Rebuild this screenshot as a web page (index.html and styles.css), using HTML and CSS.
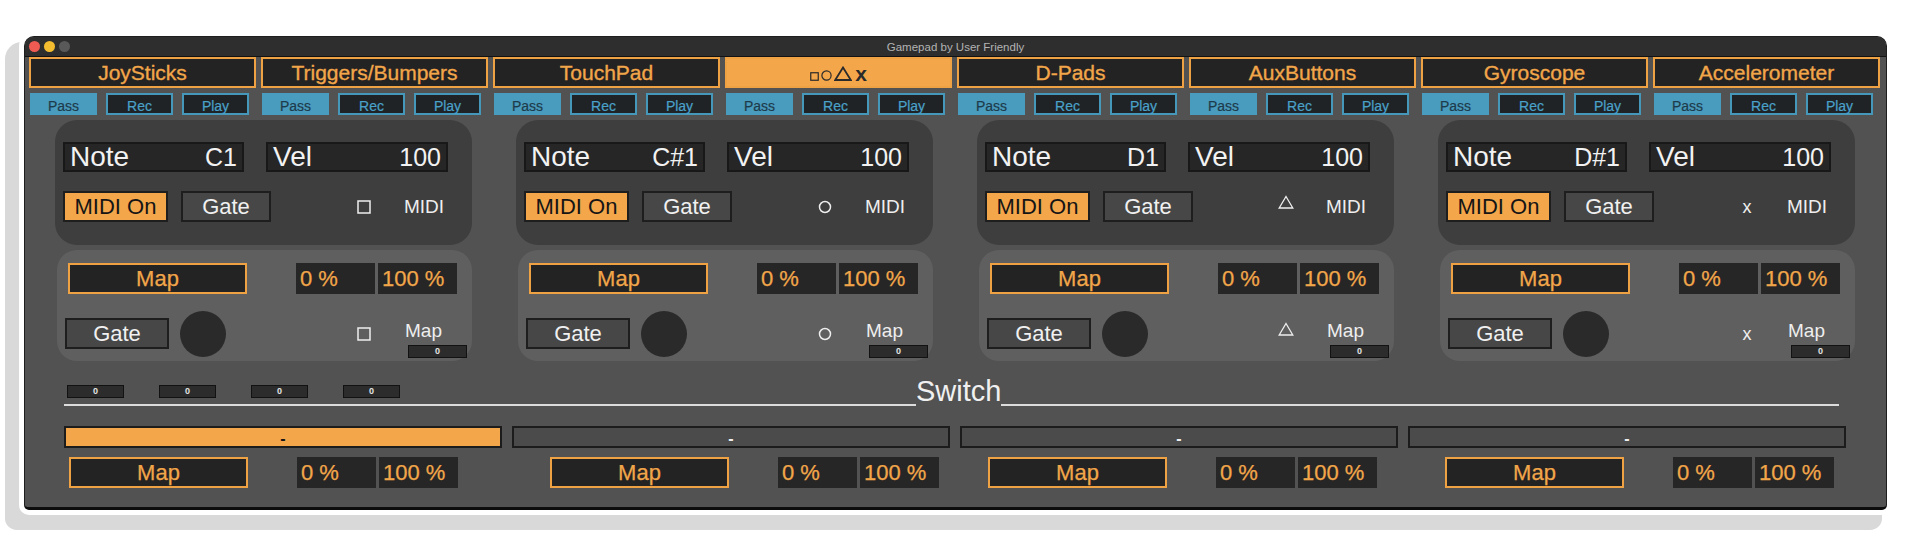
FILE: index.html
```html
<!DOCTYPE html>
<html lang="en">
<head>
    <meta charset="UTF-8">
    <title>Gamepad by User Friendly</title>
    <link rel="stylesheet" href="styles.css">
</head>
<body>
    <div class="window">
        <div class="titlebar">
            <div class="lights">
                <span class="light red"></span>
                <span class="light yellow"></span>
                <span class="light off"></span>
            </div>
            <div class="title">Gamepad by User Friendly</div>
            <div></div>
        </div>

        <div class="content">
            <!-- Module tabs -->
            <div class="modules">
                <div class="module">
                    <div class="tab">JoySticks</div>
                    <div class="sub"><span class="sb pass">Pass</span><span class="sb">Rec</span><span class="sb">Play</span></div>
                </div>
                <div class="module">
                    <div class="tab">Triggers/Bumpers</div>
                    <div class="sub"><span class="sb pass">Pass</span><span class="sb">Rec</span><span class="sb">Play</span></div>
                </div>
                <div class="module">
                    <div class="tab">TouchPad</div>
                    <div class="sub"><span class="sb pass">Pass</span><span class="sb">Rec</span><span class="sb">Play</span></div>
                </div>
                <div class="module">
                    <div class="tab active">
                        <div class="sym">
                            <svg width="9" height="9" viewBox="0 0 9 9"><rect x="0.75" y="0.75" width="7.5" height="7.5" fill="none" stroke="#2a2a2a" stroke-width="1.2"/></svg>
                            <svg width="11" height="11" viewBox="0 0 11 11"><circle cx="5.5" cy="5.5" r="4.6" fill="none" stroke="#2a2a2a" stroke-width="1.2"/></svg>
                            <svg width="18" height="15" viewBox="0 0 18 15"><path d="M9 1.5 L16.8 14 H1.2 Z" fill="none" stroke="#2a2a2a" stroke-width="1.8" stroke-linejoin="miter"/></svg>
                            <span class="sym-x">x</span>
                        </div>
                    </div>
                    <div class="sub"><span class="sb pass">Pass</span><span class="sb">Rec</span><span class="sb">Play</span></div>
                </div>
                <div class="module">
                    <div class="tab">D-Pads</div>
                    <div class="sub"><span class="sb pass">Pass</span><span class="sb">Rec</span><span class="sb">Play</span></div>
                </div>
                <div class="module">
                    <div class="tab">AuxButtons</div>
                    <div class="sub"><span class="sb pass">Pass</span><span class="sb">Rec</span><span class="sb">Play</span></div>
                </div>
                <div class="module">
                    <div class="tab">Gyroscope</div>
                    <div class="sub"><span class="sb pass">Pass</span><span class="sb">Rec</span><span class="sb">Play</span></div>
                </div>
                <div class="module">
                    <div class="tab">Accelerometer</div>
                    <div class="sub"><span class="sb pass">Pass</span><span class="sb">Rec</span><span class="sb">Play</span></div>
                </div>
            </div>

            <!-- Button groups -->
            <div class="groups">
                <div class="group">
                    <div class="upper">
                        <div class="row">
                            <div class="field"><span class="name">Note</span><span class="val">C1</span></div>
                            <div class="field vel"><span class="name">Vel</span><span class="val">100</span></div>
                        </div>
                        <div class="row row2">
                            <div class="btn on">MIDI On</div>
                            <div class="btn gate">Gate</div>
                            <div class="icon"><svg width="14" height="14" viewBox="0 0 14 14"><rect x="1" y="1" width="12" height="12" fill="none" stroke="#eee" stroke-width="1.5"/></svg></div>
                            <div class="label">MIDI</div>
                        </div>
                    </div>
                    <div class="lower">
                        <div class="row map-row">
                            <div class="map">Map</div>
                            <div class="pct first">0 %</div>
                            <div class="pct">100 %</div>
                        </div>
                        <div class="row row3">
                            <div class="btn gate wide">Gate</div>
                            <div class="knob"></div>
                            <div class="icon"><svg width="14" height="14" viewBox="0 0 14 14"><rect x="1" y="1" width="12" height="12" fill="none" stroke="#eee" stroke-width="1.5"/></svg></div>
                            <div class="map-label">
                                <div class="label">Map</div>
                                <div class="mini">0</div>
                            </div>
                        </div>
                    </div>
                </div>

                <div class="group">
                    <div class="upper">
                        <div class="row">
                            <div class="field"><span class="name">Note</span><span class="val">C#1</span></div>
                            <div class="field vel"><span class="name">Vel</span><span class="val">100</span></div>
                        </div>
                        <div class="row row2">
                            <div class="btn on">MIDI On</div>
                            <div class="btn gate">Gate</div>
                            <div class="icon"><svg width="14" height="14" viewBox="0 0 14 14"><circle cx="7" cy="7" r="5.5" fill="none" stroke="#eee" stroke-width="1.5"/></svg></div>
                            <div class="label">MIDI</div>
                        </div>
                    </div>
                    <div class="lower">
                        <div class="row map-row">
                            <div class="map">Map</div>
                            <div class="pct first">0 %</div>
                            <div class="pct">100 %</div>
                        </div>
                        <div class="row row3">
                            <div class="btn gate wide">Gate</div>
                            <div class="knob"></div>
                            <div class="icon"><svg width="14" height="14" viewBox="0 0 14 14"><circle cx="7" cy="7" r="5.5" fill="none" stroke="#eee" stroke-width="1.5"/></svg></div>
                            <div class="map-label">
                                <div class="label">Map</div>
                                <div class="mini">0</div>
                            </div>
                        </div>
                    </div>
                </div>

                <div class="group">
                    <div class="upper">
                        <div class="row">
                            <div class="field"><span class="name">Note</span><span class="val">D1</span></div>
                            <div class="field vel"><span class="name">Vel</span><span class="val">100</span></div>
                        </div>
                        <div class="row row2">
                            <div class="btn on">MIDI On</div>
                            <div class="btn gate">Gate</div>
                            <div class="icon up"><svg width="16" height="14" viewBox="0 0 16 14"><path d="M8 1.5 L14.8 13 H1.2 Z" fill="none" stroke="#eee" stroke-width="1.3"/></svg></div>
                            <div class="label">MIDI</div>
                        </div>
                    </div>
                    <div class="lower">
                        <div class="row map-row">
                            <div class="map">Map</div>
                            <div class="pct first">0 %</div>
                            <div class="pct">100 %</div>
                        </div>
                        <div class="row row3">
                            <div class="btn gate wide">Gate</div>
                            <div class="knob"></div>
                            <div class="icon up"><svg width="16" height="14" viewBox="0 0 16 14"><path d="M8 1.5 L14.8 13 H1.2 Z" fill="none" stroke="#eee" stroke-width="1.3"/></svg></div>
                            <div class="map-label">
                                <div class="label">Map</div>
                                <div class="mini">0</div>
                            </div>
                        </div>
                    </div>
                </div>

                <div class="group">
                    <div class="upper">
                        <div class="row">
                            <div class="field"><span class="name">Note</span><span class="val">D#1</span></div>
                            <div class="field vel"><span class="name">Vel</span><span class="val">100</span></div>
                        </div>
                        <div class="row row2">
                            <div class="btn on">MIDI On</div>
                            <div class="btn gate">Gate</div>
                            <div class="icon"><span class="x">x</span></div>
                            <div class="label">MIDI</div>
                        </div>
                    </div>
                    <div class="lower">
                        <div class="row map-row">
                            <div class="map">Map</div>
                            <div class="pct first">0 %</div>
                            <div class="pct">100 %</div>
                        </div>
                        <div class="row row3">
                            <div class="btn gate wide">Gate</div>
                            <div class="knob"></div>
                            <div class="icon"><span class="x">x</span></div>
                            <div class="map-label">
                                <div class="label">Map</div>
                                <div class="mini">0</div>
                            </div>
                        </div>
                    </div>
                </div>
            </div>

            <!-- Switch section -->
            <div class="switch">
                <div class="seg seg-left">
                    <div class="mini wide">0</div>
                    <div class="mini wide">0</div>
                    <div class="mini wide">0</div>
                    <div class="mini wide">0</div>
                </div>
                <div class="switch-label">Switch</div>
                <div class="seg seg-right"></div>
            </div>

            <div class="bars">
                <div class="bar on">-</div>
                <div class="bar">-</div>
                <div class="bar">-</div>
                <div class="bar">-</div>
            </div>

            <div class="bars bottom">
                <div class="col">
                    <div class="map">Map</div>
                    <div class="pct first">0 %</div>
                    <div class="pct">100 %</div>
                </div>
                <div class="col">
                    <div class="map">Map</div>
                    <div class="pct first">0 %</div>
                    <div class="pct">100 %</div>
                </div>
                <div class="col">
                    <div class="map">Map</div>
                    <div class="pct first">0 %</div>
                    <div class="pct">100 %</div>
                </div>
                <div class="col">
                    <div class="map">Map</div>
                    <div class="pct first">0 %</div>
                    <div class="pct">100 %</div>
                </div>
            </div>
        </div>
    </div>
</body>
</html>
```

FILE: styles.css
```css
* {
    box-sizing: border-box;
}

html, body {
    margin: 0;
}

body {
    width: 1920px;
    height: 551px;
    overflow: hidden;
    background: #fff;
    font-family: "Liberation Sans", Arial, sans-serif;
    padding: 36px 0 0 24px;
}

/* Window frame with the grey drop card behind it */
.window {
    width: 1863px;
    height: 474px;
    background: #525252;
    border: 1px solid #1e1e1e;
    border-bottom: 3px solid #0c0c0c;
    border-radius: 10px 10px 5px 5px;
    box-shadow: 0 0 0 5px #fff, -12px 13px 0 7px #d9d9d9;
    overflow: hidden;
}

.titlebar {
    height: 20px;
    background: #2e2e2e;
    border-bottom: 1px solid #121212;
    display: grid;
    grid-template-columns: 1fr auto 1fr;
    align-items: center;
}

.lights {
    display: flex;
    gap: 4px;
    padding-left: 4px;
}

.light {
    width: 11px;
    height: 11px;
    border-radius: 50%;
}

.light.red { background: #ee5b52; }
.light.yellow { background: #f4bd30; }
.light.off { background: #595959; }

.title {
    font-size: 11.5px;
    color: #b3b3b3;
}

.content {
    padding: 0 6px 0 4px;
}

/* Module tabs */
.modules {
    display: grid;
    grid-template-columns: repeat(8, 227px);
    column-gap: 5px;
}

.tab {
    height: 31px;
    border: 2px solid #efa244;
    background: #232323;
    color: #f2a64a;
    font-size: 21px;
    -webkit-text-stroke: 0.35px #f2a64a;
    display: flex;
    align-items: center;
    justify-content: center;
    padding-top: 1px;
}

.tab.active {
    background: #f4a64b;
}

.sym {
    display: flex;
    align-items: flex-end;
    gap: 2px;
    height: 15px;
    margin-top: 1px;
}

.sym svg {
    display: block;
}

.sym-x {
    font-size: 21px;
    font-weight: bold;
    line-height: 14px;
    color: #2a2a2a;
    -webkit-text-stroke: 0;
    margin-left: 1px;
}

.sub {
    display: grid;
    grid-template-columns: repeat(3, 67px);
    column-gap: 9px;
    margin: 5px 0 0 1px;
}

.sb {
    height: 22px;
    border: 2px solid #4698bb;
    background: #1f2326;
    color: #4aa1c9;
    font-size: 14px;
    -webkit-text-stroke: 0.2px #4aa1c9;
    line-height: 20px;
    padding-top: 1px;
    text-align: center;
}

.sb.pass {
    background: #4a9cbf;
    border-color: #4a9cbf;
    color: #1d3b4b;
    -webkit-text-stroke: 0.2px #1d3b4b;
}

/* Button groups */
.groups {
    display: grid;
    grid-template-columns: repeat(4, 417px);
    column-gap: 44px;
    margin: 5px 0 0 26px;
}

.upper {
    height: 125px;
    background: #3e3e3e;
    border-radius: 22px;
    padding: 22px 0 0 8px;
}

.row {
    display: flex;
    align-items: center;
}

.field {
    width: 181px;
    height: 30px;
    background: #262626;
    border: 2px solid #181818;
    color: #f2f2f2;
    display: flex;
    align-items: center;
    justify-content: space-between;
    padding: 0 5px;
}

.field.vel {
    width: 182px;
    margin-left: 22px;
}

.field .name {
    font-size: 28px;
}

.field .val {
    font-size: 25px;
}

.row2 {
    margin-top: 19px;
}

.btn {
    height: 31px;
    border: 2px solid #1e1e1e;
    font-size: 22px;
    display: flex;
    align-items: center;
    justify-content: center;
}

.btn.on {
    width: 105px;
    background: #f4a64b;
    color: #151515;
}

.btn.gate {
    width: 90px;
    margin-left: 13px;
    background: #474747;
    color: #f0f0f0;
}

.btn.gate.wide {
    width: 104px;
    margin-left: 0;
}

.icon {
    width: 30px;
    margin-left: 78px;
    display: flex;
    justify-content: center;
}

.icon svg {
    display: block;
}

.icon.up {
    margin-bottom: 10px;
}

.x {
    color: #f0f0f0;
    font-size: 18px;
    line-height: 14px;
}

.label {
    margin-left: 25px;
    font-size: 19px;
    line-height: 20px;
    color: #eeeeee;
}

.lower {
    height: 111px;
    margin: 5px 0 0 2px;
    background: #5f5f5f;
    border-radius: 20px;
    padding-top: 13px;
}

.map-row {
    padding-left: 11px;
}

.map {
    width: 179px;
    height: 31px;
    background: #232323;
    border: 2px solid #efa244;
    color: #f2a64a;
    font-size: 22px;
    -webkit-text-stroke: 0.25px #f2a64a;
    display: flex;
    align-items: center;
    justify-content: center;
}

.pct {
    width: 79px;
    height: 31px;
    margin-left: 3px;
    background: #262626;
    color: #f2a64a;
    font-size: 22px;
    -webkit-text-stroke: 0.25px #f2a64a;
    line-height: 31px;
    padding-left: 4px;
}

.pct.first {
    margin-left: 49px;
}

.row3 {
    height: 49px;
    margin-top: 15px;
    padding-left: 8px;
}

.knob {
    width: 46px;
    height: 46px;
    margin-left: 11px;
    border-radius: 50%;
    background: #2a2a2a;
}

.row3 .icon {
    margin-left: 123px;
}

.map-label {
    align-self: flex-end;
    margin-left: 26px;
}

.map-label .label {
    margin-left: 0;
}

.mini {
    width: 59px;
    height: 13px;
    margin: 4px 0 0 3px;
    background: #2c2c2c;
    border: 1px solid #121212;
    color: #e4e4e4;
    font-size: 9px;
    font-weight: bold;
    line-height: 11px;
    text-align: center;
}

/* Switch section */
.switch {
    display: flex;
    align-items: flex-end;
    width: 1775px;
    height: 29px;
    margin: 16px 0 0 35px;
}

.seg {
    border-bottom: 2px solid #dcdcdc;
}

.seg-left {
    width: 852px;
    display: flex;
    align-items: flex-end;
    gap: 35px;
    padding: 0 0 6px 3px;
}

.mini.wide {
    width: 57px;
    margin: 0;
}

.switch-label {
    font-size: 29px;
    line-height: 29px;
    color: #f0f0f0;
}

.seg-right {
    flex: 1;
}

.bars {
    display: grid;
    grid-template-columns: repeat(4, 438px);
    column-gap: 10px;
    margin: 20px 0 0 35px;
}

.bar {
    height: 22px;
    background: #4b4b4b;
    border: 2px solid #1c1c1c;
    color: #eeeeee;
    font-size: 16px;
    font-weight: bold;
    line-height: 20px;
    padding-top: 1px;
    text-align: center;
}

.bar.on {
    background: #f4a64b;
    color: #151515;
}

.bars.bottom {
    margin-top: 9px;
}

.col {
    display: flex;
    padding-left: 37px;
}

.col:first-child {
    padding-left: 5px;
}

.col:nth-child(2) {
    padding-left: 38px;
}

.col:nth-child(3) {
    padding-left: 28px;
}
```
